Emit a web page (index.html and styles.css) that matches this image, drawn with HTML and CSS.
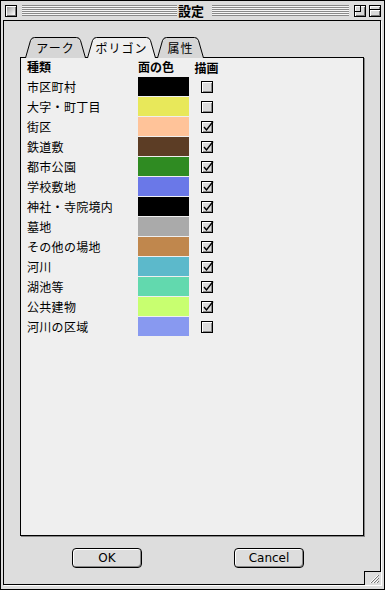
FILE: index.html
```html
<!DOCTYPE html>
<html lang="ja">
<head>
  <meta charset="UTF-8" />
  <title>設定</title>
  <link rel="stylesheet" href="styles.css">
</head>
<body>
  <div class="window">
    <div class="titlebar">
      <span class="tbox close"></span>
      <span class="stripes first"></span>
      <span class="title">設定</span>
      <span class="stripes"></span>
      <span class="tbox zoom"><span class="zoom-inner"></span></span>
      <span class="tbox collapse"><span class="collapse-line"></span></span>
    </div>

    <div class="frame">
      <div class="tabs">
        <div class="tab" style="width:61px">
          <svg class="tab-shape" width="61" height="22" viewBox="0 0 61 22"><path d="M0.5,22 L5.5,4.5 Q6.5,1.5 9.5,1.5 L51.5,1.5 Q54.5,1.5 55.5,4.5 L60.5,22" fill="#d6d6d6" stroke="#000"/></svg>
          <span class="tab-label">アーク</span>
        </div>
        <div class="tab active" style="width:69px">
          <svg class="tab-shape" width="69" height="22" viewBox="0 0 69 22"><path d="M0.5,22 L5.5,4.5 Q6.5,1.5 9.5,1.5 L59.5,1.5 Q62.5,1.5 63.5,4.5 L68.5,22" fill="#efefef" stroke="#000"/></svg>
          <span class="tab-label">ポリゴン</span>
        </div>
        <div class="tab" style="width:47px">
          <svg class="tab-shape" width="47" height="22" viewBox="0 0 47 22"><path d="M0.5,22 L5.5,4.5 Q6.5,1.5 9.5,1.5 L37.5,1.5 Q40.5,1.5 41.5,4.5 L46.5,22" fill="#d6d6d6" stroke="#000"/></svg>
          <span class="tab-label">属性</span>
        </div>
      </div>

      <div class="panel">
        <div class="layer-table" id="layers">
          <div class="head">種類</div>
          <div class="head">面の色</div>
          <div class="head center">描画</div>
        </div>
      </div>

      <div class="buttons">
        <button type="button" class="btn">OK</button>
        <button type="button" class="btn">Cancel</button>
      </div>

      <div class="grow">
        <svg width="16" height="13" viewBox="0 0 16 13">
          <path d="M5,11 L13,3 M8,11 L13,6 M11,11 L13,9" stroke="#fff" stroke-width="1"/>
          <path d="M6,11 L14,3 M9,11 L14,6 M12,11 L14,9" stroke="#777" stroke-width="1"/>
        </svg>
      </div>
    </div>
  </div>

  <script>
    const capas = [
      ["市区町村", "#000000", false],
      ["大字・町丁目", "#e8e85a", false],
      ["街区", "#ffc399", true],
      ["鉄道敷", "#5c3d25", true],
      ["都市公園", "#2f8b22", true],
      ["学校敷地", "#6a78e8", true],
      ["神社・寺院境内", "#000000", true],
      ["墓地", "#aaaaaa", true],
      ["その他の場地", "#c0874d", true],
      ["河川", "#5cb9cb", true],
      ["湖池等", "#62d9ae", true],
      ["公共建物", "#c8ff70", true],
      ["河川の区域", "#8899f0", false]
    ];

    const tabla = document.getElementById("layers");
    const check = '<svg width="14" height="13" viewBox="0 0 14 13"><path d="M3,7 L5.5,10 L12,1.5" fill="none" stroke="#000" stroke-width="1.4"/></svg>';

    capas.forEach(([nombre, color, visible]) => {
      tabla.insertAdjacentHTML("beforeend",
        '<div class="name">' + nombre + '</div>' +
        '<div class="swatch-cell"><div class="swatch" style="background:' + color + '"></div></div>' +
        '<div class="center"><span class="checkbox">' + (visible ? check : '') + '</span></div>');
    });
  </script>
</body>
</html>
```

FILE: styles.css
```css
html, body {
  margin: 0;
  background: #fff;
}

body {
  font-family: "Noto Sans CJK JP", "Liberation Sans", sans-serif;
  font-size: 12px;
  color: #000;
}

.window {
  width: 385px;
  height: 590px;
  box-sizing: border-box;
  border: 1px solid #000;
  background: #dddddd;
  padding: 0 3px 4px 2px;
  display: flex;
  flex-direction: column;
}

/* Title bar */
.titlebar {
  height: 19px;
  display: flex;
  align-items: center;
  margin-left: -2px;
  margin-right: -3px;
  padding: 0 3px 0 4px;
}

.tbox {
  width: 12px;
  height: 12px;
  box-sizing: border-box;
  border: 1px solid #000;
  background: linear-gradient(135deg, #9a9a9a, #f4f4f4 70%);
  box-shadow: inset 1px 1px 0 #fff, inset -1px -1px 0 #777;
  flex: none;
  position: relative;
}

.close {
  background: linear-gradient(135deg, #8e8e8e, #f6f6f6 80%);
}

.zoom {
  margin-left: 5px;
  background: #d8d8d8;
}

.zoom-inner {
  display: block;
  width: 5px;
  height: 5px;
  border-right: 1px solid #000;
  border-bottom: 1px solid #000;
}

.collapse {
  margin-left: 3px;
  background: #d8d8d8;
}

.collapse-line {
  display: block;
  margin-top: 3px;
  border-top: 1px solid #000;
  border-bottom: 1px solid #fff;
}

.stripes {
  flex: 1;
  height: 11px;
  margin-left: 5px;
  background: repeating-linear-gradient(to bottom, #8a8a8a 0 1px, #f6f6f6 1px 2px);
}

.stripes.first {
  flex: none;
  width: 155px;
}

.title {
  font-weight: bold;
  font-size: 13px;
  line-height: 19px;
  padding: 0 3px;
  margin-left: -2px;
}

/* Frame */
.frame {
  flex: 1;
  border: 1px solid #000;
  box-shadow: 1px 1px 0 #fff;
  position: relative;
  display: flex;
  flex-direction: column;
}

.tabs {
  display: flex;
  gap: 1px;
  margin: 15px 0 -1px 21px;
  height: 22px;
  position: relative;
  z-index: 1;
}

.tab {
  position: relative;
  height: 22px;
  display: flex;
  justify-content: center;
}

.tab-shape {
  position: absolute;
  left: 0;
  top: 0;
}

.tab-label {
  position: relative;
  font-size: 12px;
  line-height: 22px;
  letter-spacing: 1px;
  padding-top: 1px;
}

.panel {
  margin: 0 16px;
  height: 479px;
  box-sizing: border-box;
  border: 1px solid #000;
  box-shadow: 1px 1px 0 #888;
  background: #efefef;
  padding: 0 0 0 6px;
}

.layer-table {
  display: grid;
  grid-template-columns: 111px 51px 35px;
  grid-template-rows: 19px;
  grid-auto-rows: 20px;
}

.head {
  font-weight: bold;
  line-height: 16px;
  padding-top: 1px;
}

.name {
  line-height: 20px;
  letter-spacing: 0.3px;
}

.swatch {
  height: 19px;
}

.center {
  display: flex;
  justify-content: center;
  align-items: center;
}

.checkbox {
  width: 12px;
  height: 12px;
  box-sizing: border-box;
  border: 1px solid #000;
  background: #dcdcdc;
  box-shadow: inset 1px 1px 0 #fff, inset -1px -1px 0 #888;
  position: relative;
  margin-left: 1px;
}

.checkbox svg {
  position: absolute;
  left: -1px;
  top: -2px;
}

/* Buttons */
.buttons {
  display: flex;
  gap: 92px;
  padding-left: 68px;
  margin-top: 12px;
}

.btn {
  width: 70px;
  height: 20px;
  box-sizing: border-box;
  border: 1px solid #000;
  border-radius: 4px;
  background: #dddddd;
  box-shadow: inset 1px 1px 0 #fff, inset -1px -1px 0 #888;
  font-family: "DejaVu Sans", "Liberation Sans", sans-serif;
  font-size: 12px;
  padding: 0;
  color: #000;
}

/* Grow box */
.grow {
  position: absolute;
  right: -1px;
  bottom: -1px;
  width: 16px;
  height: 13px;
  border-top: 1px solid #000;
  border-left: 1px solid #000;
  background: #dddddd;
}

.grow svg {
  display: block;
}
```
